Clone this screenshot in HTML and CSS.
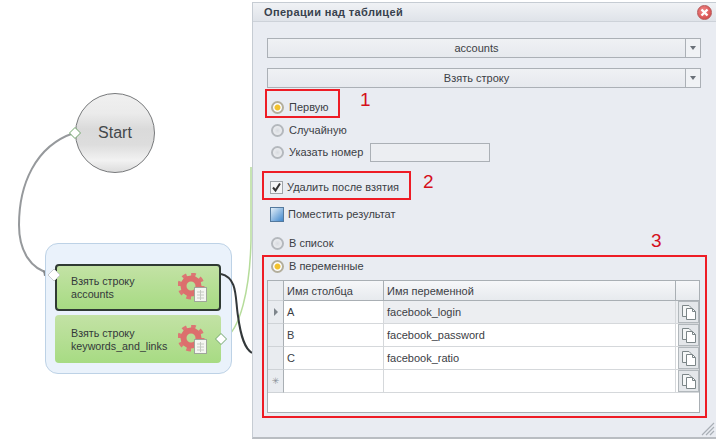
FILE: index.html
```html
<!DOCTYPE html>
<html lang="ru">
<head>
<meta charset="utf-8">
<title>Операции над таблицей</title>
<link rel="stylesheet" href="styles.css">
</head>
<body>
<div class="canvas">
  <svg class="wires" width="260" height="442" viewBox="0 0 260 442">
    <path d="M74 133C35 146 19 185 19 225C19 250 30 270 52 274" fill="none" stroke="#96999c" stroke-width="2"/>
    <path d="M43 270L55 274L44 276Z" fill="#85888b"/>
    <path d="M224 339C240 330 250 290 251 240L251 167" fill="none" stroke="#b5dc9a" stroke-width="1.5"/>
  </svg>
  <div class="start">Start</div>
  <div class="group">
    <div class="node node-active">
      <span class="node-text">Взять строку<br>accounts</span>
      <svg class="gear" width="30" height="30" viewBox="0 0 30 30"><use href="#gear-icon"/></svg>
    </div>
    <div class="node">
      <span class="node-text">Взять строку<br>keywords_and_links</span>
      <svg class="gear" width="30" height="30" viewBox="0 0 30 30"><use href="#gear-icon"/></svg>
    </div>
  </div>
  <svg class="wires wires-top" width="260" height="442" viewBox="0 0 260 442">
    <path d="M221 274C238 278 235 298 238 316C241 338 245 349 252 353" fill="none" stroke="#33383a" stroke-width="2"/>
    <path d="M75 127.500L80.500 133L75 138.500L69.500 133Z" fill="#fff" stroke="#6fa56a"/>
    <path d="M54 269L60 275L54 281L48 275Z" fill="#fff" stroke="#c8ccd0"/>
    <path d="M221 333.500L226.500 339L221 344.500L215.500 339Z" fill="#fff" stroke="#6fa56a"/>
  </svg>
  <svg width="0" height="0" class="defs">
    <defs>
      <g id="gear-icon">
        <circle cx="13" cy="13" r="11.500" fill="none" stroke="#dc7674" stroke-width="4" stroke-dasharray="4.500 4.500"/>
        <circle cx="13" cy="13" r="7.500" fill="none" stroke="#dc6f6d" stroke-width="6"/>
        <rect x="16.500" y="14.500" width="12" height="14" fill="#f5f6f2" stroke="#a0a69b"/>
        <path d="M19 19H26M19 22H26M19 25H26M22.500 17V27" stroke="#c5cac2" fill="none"/>
      </g>
      <g id="copy-icon">
        <path d="M1.500 1.500H8L10 3.500V12.500H1.500Z" fill="#f5f7f7" stroke="#7c8688"/>
        <path d="M5.500 4.500H11.500L14.500 7.500V15.500H5.500Z" fill="#fff" stroke="#7c8688"/>
        <path d="M11.500 4.500V7.500H14.500" fill="none" stroke="#7c8688"/>
      </g>
    </defs>
  </svg>
</div>

<section class="dialog">
  <header class="title-bar">
    <span class="title">Операции над таблицей</span>
    <span class="close"><svg width="13" height="13" viewBox="0 0 13 13"><path d="M3.500 3.500L9.500 9.500M9.500 3.500L3.500 9.500" stroke="#fff" stroke-width="2.400"/></svg></span>
  </header>
  <div class="body">
    <div class="combo"><span class="combo-value">accounts</span><span class="combo-btn"></span></div>
    <div class="combo"><span class="combo-value">Взять строку</span><span class="combo-btn"></span></div>
    <div class="radio-row first-radio"><span class="radio on"></span>Первую</div>
    <div class="radio-row second-radio"><span class="radio"></span>Случайную</div>
    <div class="radio-row third-radio"><span class="radio"></span>Указать номер<span class="num-input"></span></div>
    <div class="check-row"><span class="check"><svg width="11" height="11" viewBox="0 0 11 11"><path d="M2 5.500L4.500 8.500L9 1.500" fill="none" stroke="#333" stroke-width="2"/></svg></span>Удалить после взятия</div>
    <div class="result-row"><span class="save-icon"></span>Поместить результат</div>
    <div class="radio-row list-radio"><span class="radio"></span>В список</div>
    <div class="radio-row vars-radio"><span class="radio on"></span>В переменные</div>
    <div class="grid">
      <div class="cell head rowhead"></div>
      <div class="cell head">Имя столбца</div>
      <div class="cell head">Имя переменной</div>
      <div class="cell head last"></div>

      <div class="cell rowhead"><span class="arrow"></span></div>
      <div class="cell">A</div>
      <div class="cell selected">facebook_login</div>
      <div class="cell selected last"><span class="copy"><svg width="16" height="17" viewBox="0 0 16 17"><use href="#copy-icon"/></svg></span></div>

      <div class="cell rowhead"></div>
      <div class="cell">B</div>
      <div class="cell">facebook_password</div>
      <div class="cell last"><span class="copy"><svg width="16" height="17" viewBox="0 0 16 17"><use href="#copy-icon"/></svg></span></div>

      <div class="cell rowhead"></div>
      <div class="cell">C</div>
      <div class="cell">facebook_ratio</div>
      <div class="cell last"><span class="copy"><svg width="16" height="17" viewBox="0 0 16 17"><use href="#copy-icon"/></svg></span></div>

      <div class="cell rowhead star">✳</div>
      <div class="cell"></div>
      <div class="cell"></div>
      <div class="cell last"><span class="copy"><svg width="16" height="17" viewBox="0 0 16 17"><use href="#copy-icon"/></svg></span></div>
    </div>
    <svg class="grip" width="14" height="14" viewBox="0 0 14 14"><path d="M1 13L13 1M5 13L13 5M9 13L13 9" stroke="#a9afb6" stroke-width="1.200"/></svg>
  </div>
  <div class="mark box-1"></div><span class="num num-1">1</span>
  <div class="mark box-2"></div><span class="num num-2">2</span>
  <div class="mark box-3"></div><span class="num num-3">3</span>
</section>
</body>
</html>
```

FILE: styles.css
```css
html, body {
  margin: 0;
  padding: 0;
  width: 716px;
  height: 442px;
  overflow: hidden;
  background: #fff;
  font-family: "Liberation Sans", Arial, sans-serif;
  font-size: 11px;
  color: #3b4045;
}
.canvas {
  position: absolute;
  left: 0;
  top: 0;
  width: 260px;
  height: 442px;
}
.wires { position: absolute; left: 0; top: 0; }
.defs { position: absolute; }
.start {
  position: absolute;
  left: 75px;
  top: 93px;
  width: 78px;
  height: 78px;
  border: 1px solid #77797b;
  border-radius: 50%;
  display: flex;
  align-items: center;
  justify-content: center;
  font-size: 16px;
  color: #44484b;
  background: linear-gradient(180deg, #f0f0f0 0%, #ebebeb 25%, #dadada 45%, #dddddd 65%, #f2f2f2 85%, #dcdcdc 100%);
}
.group {
  position: absolute;
  left: 45px;
  top: 243px;
  width: 167px;
  height: 109px;
  padding: 20px 9px 0;
  border: 1px solid #bdd2e6;
  border-radius: 13px;
  background: #eaf2fb;
  display: flex;
  flex-direction: column;
  gap: 4px;
}
.node {
  box-sizing: border-box;
  width: 166px;
  height: 48px;
  flex: none;
  border-radius: 4px;
  background: linear-gradient(180deg, #c3e2a5 0%, #a7db83 100%);
  display: flex;
  align-items: center;
  justify-content: space-between;
  padding: 2px 13px 0 16px;
  font-size: 10.700px;
  line-height: 13px;
  color: #33383a;
}
.node-active {
  height: 47px;
  border: 2px solid #2f3a33;
  padding: 0 11px 0 14px;
}
.gear { flex: none; }
.dialog {
  position: absolute;
  left: 252px;
  top: 2px;
  width: 464px;
  height: 437px;
  background: #e9ecf2;
  border-left: 1px solid #c6ccd3;
  border-top: 1px solid #c6ccd3;
  border-bottom: 2px solid #b9bdc2;
  box-sizing: border-box;
  display: flex;
  flex-direction: column;
}
.title-bar {
  flex: none;
  height: 18px;
  display: flex;
  align-items: center;
  justify-content: space-between;
  padding: 0 4px 0 11px;
  background: linear-gradient(180deg, #f0f2f5, #dfe3e9);
  border-bottom: 1px solid #cdd2d9;
}
.title { font-weight: bold; font-size: 11px; letter-spacing: 0.350px; color: #37414d; }
.close {
  width: 13px;
  height: 13px;
  border-radius: 50%;
  background: radial-gradient(circle at 40% 35%, #f08a8a, #cf3b3b);
  border: 1px solid #b65858;
  display: flex;
}
.body {
  position: relative;
  flex: 1;
  padding: 16px 15px 0 14px;
}
.combo {
  box-sizing: border-box;
  height: 20px;
  margin-bottom: 10px;
  display: flex;
  background: linear-gradient(180deg, #eff1f4, #e6e9ee);
  border: 1px solid #abb0b6;
  text-align: center;
  line-height: 18px;
}
.combo-value { flex: 1; }
.combo-btn {
  width: 14px;
  border-left: 1px solid #abb0b6;
  background: #f0f2f5;
  position: relative;
}
.combo-btn::after {
  content: "";
  position: absolute;
  left: 4px;
  top: 7px;
  border: 3px solid transparent;
  border-top: 4px solid #6a7078;
  border-bottom: 0;
}
.radio-row, .check-row, .result-row {
  display: flex;
  align-items: center;
  height: 14px;
  line-height: 14px;
}
.first-radio { margin: 12px 0 0 4px; }
.second-radio { margin: 9px 0 0 4px; }
.third-radio { margin: 8px 0 0 4px; }
.check-row { margin: 21px 0 0 3px; }
.result-row { margin: 13px 0 0 3px; }
.list-radio { margin: 15px 0 0 4px; }
.vars-radio { margin: 9px 0 0 4px; }
.radio {
  box-sizing: border-box;
  width: 13px;
  height: 13px;
  margin-right: 5px;
  border-radius: 50%;
  border: 2px solid #b4b8bd;
  background: radial-gradient(circle, #d8dbe0 0%, #f4f5f7 100%);
}
.radio.on {
  background: radial-gradient(circle, #f2c22e 0 2.500px, #fff 3.500px, #eef0f3 100%);
  border-color: #b3ae9c;
}
.num-input {
  box-sizing: border-box;
  width: 120px;
  height: 19px;
  margin-left: 7px;
  background: #eceef2;
  border: 1px solid #abb0b6;
}
.check {
  box-sizing: border-box;
  width: 13px;
  height: 13px;
  margin-right: 4px;
  border: 1px solid #9ea3a9;
  background: #f4f5f7;
  display: flex;
}
.save-icon {
  box-sizing: border-box;
  width: 14px;
  height: 15px;
  margin-right: 4px;
  border: 1px solid #54799e;
  background: linear-gradient(135deg, #e3eff9, #4087cd);
}
.grid {
  box-sizing: border-box;
  width: 433px;
  height: 133px;
  margin-top: 7px;
  background: #fff;
  border: 1px solid #a9afb4;
  display: grid;
  grid-template-columns: 16px 100px 292px 23px;
  grid-template-rows: 20px 23px 23px 23px 23px;
  align-content: start;
}
.cell {
  box-sizing: border-box;
  padding-left: 3px;
  display: flex;
  align-items: center;
  border-right: 1px solid #d5d8db;
  border-bottom: 1px solid #d5d8db;
}
.cell.last { border-right: 0; padding: 0 0 0 2px; }
.head {
  background: linear-gradient(180deg, #f6f7f9, #e7eaee);
  border-right-color: #a9afb4;
  border-bottom-color: #a9afb4;
}
.rowhead {
  background: #e9ecf0;
  border-right-color: #a9afb4;
  border-bottom-color: #cfd3d7;
  padding: 0;
  justify-content: center;
  color: #8a9097;
}
.selected { background: #eceef1; }
.arrow {
  border: 4px solid transparent;
  border-left: 4px solid #7e858c;
  border-right: 0;
}
.star { font-family: "DejaVu Sans", sans-serif; font-size: 9px; }
.copy {
  box-sizing: border-box;
  width: 21px;
  height: 22px;
  display: flex;
  align-items: center;
  justify-content: center;
  background: #e4e7ea;
  border: 1px solid #b2b8bc;
}
.grip { position: absolute; right: 1px; bottom: 1px; }
.mark {
  position: absolute;
  box-sizing: border-box;
  border: 2px solid #ee1c25;
}
.box-1 { left: 12px; top: 86px; width: 75px; height: 29px; }
.box-2 { left: 9px; top: 168px; width: 149px; height: 29px; }
.box-3 { left: 9px; top: 252px; width: 445px; height: 163px; }
.num {
  position: absolute;
  font-size: 19px;
  line-height: 20px;
  color: #d5101b;
}
.num-1 { left: 107px; top: 87px; }
.num-2 { left: 170px; top: 169px; }
.num-3 { left: 398px; top: 228px; }
```
